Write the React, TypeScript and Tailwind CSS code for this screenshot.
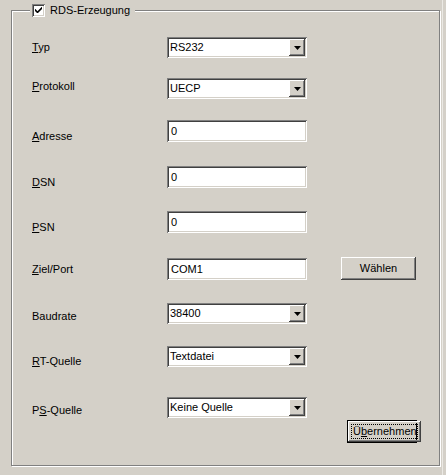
import React from "react";

const sunken =
  "shadow-[inset_1px_1px_0_#808080,inset_-1px_-1px_0_#ffffff,inset_2px_2px_0_#404040,inset_-2px_-2px_0_#d4d0c8]";
const raised =
  "shadow-[inset_-1px_-1px_0_#404040,inset_1px_1px_0_#ffffff,inset_-2px_-2px_0_#808080,inset_2px_2px_0_#d4d0c8]";

const Arrow = () => (
  <svg width="7" height="4" viewBox="0 0 7 4">
    <path d="M0 0H7L3.5 4Z" fill="black" />
  </svg>
);

const Combo = ({ value }: { value: string }) => (
  <div className={`flex h-[21px] w-[140px] bg-white p-[2px] ${sunken}`}>
    <div className="flex-1 pl-[1px] leading-[17px]">{value}</div>
    <div className={`flex h-[17px] w-[16px] items-center justify-center bg-[#d4d0c8] ${raised}`}>
      <Arrow />
    </div>
  </div>
);

const Edit = ({ value }: { value: string }) => (
  <div className={`h-[22px] w-[140px] bg-white pl-[4px] leading-[20px] pt-[1px] ${sunken}`}>{value}</div>
);

type Row = {
  pre: string;
  key_: string;
  post: string;
  h: string;
  lo: string;
  control: React.ReactNode;
  extra?: React.ReactNode;
};

const rows: Row[] = [
  { pre: "", key_: "T", post: "yp", h: "h-[41px]", lo: "pt-[4px]", control: <Combo value="RS232" /> },
  { pre: "", key_: "P", post: "rotokoll", h: "h-[42px]", lo: "pt-[2px]", control: <Combo value="UECP" /> },
  { pre: "", key_: "A", post: "dresse", h: "h-[46px]", lo: "pt-[10px]", control: <Edit value="0" /> },
  { pre: "", key_: "D", post: "SN", h: "h-[45px]", lo: "pt-[10px]", control: <Edit value="0" /> },
  { pre: "", key_: "P", post: "SN", h: "h-[47px]", lo: "pt-[10px]", control: <Edit value="0" /> },
  {
    pre: "",
    key_: "Z",
    post: "iel/Port",
    h: "h-[45px]",
    lo: "pt-[5px]",
    control: <Edit value="COM1" />,
    extra: (
      <div className={`ml-[34px] -mt-px flex h-[23px] w-[75px] items-center justify-center bg-[#d4d0c8] ${raised}`}>
        Wählen
      </div>
    ),
  },
  { pre: "Baudrate", key_: "", post: "", h: "h-[43px]", lo: "pt-[7px]", control: <Combo value="38400" /> },
  { pre: "", key_: "R", post: "T-Quelle", h: "h-[51px]", lo: "pt-[9px]", control: <Combo value="Textdatei" /> },
];

export default function App() {
  return (
    <div className="flex h-[475px] w-[446px] bg-[#d4d0c8] font-['Liberation_Sans',Arial,sans-serif] text-[11px] text-black">
      <div
        className={`relative ml-[11px] mt-[10px] h-[456px] w-[429px] border border-[#808080] pl-[20px] pt-[26px] shadow-[inset_1px_1px_0_#ffffff,1px_1px_0_#ffffff]`}
      >
        <div className="absolute left-[18px] top-[-7px] flex items-center bg-[#d4d0c8] pl-[2px] pr-[5px]">
          <div className={`flex h-[13px] w-[13px] items-center justify-center bg-white ${sunken}`}>
            <svg width="7" height="7" viewBox="0 0 7 7">
              <path d="M0 2V4L2 6H3L7 2V0H6.6L2.5 4.2L0.4 2Z" fill="black" />
            </svg>
          </div>
          <span className="ml-[5px] leading-[13px]">RDS-Erzeugung</span>
        </div>

        {rows.map((r, i) => (
          <div key={i} className={`flex ${r.h}`}>
            <div className={`w-[135px] leading-[13px] ${r.lo}`}>
              {r.pre}
              {r.key_ && <span className="underline">{r.key_}</span>}
              {r.post}
            </div>
            {r.control}
            {r.extra}
          </div>
        ))}

        <div className="flex">
          <div className="w-[135px] pt-[7px] leading-[13px]">
            P<span className="underline">S</span>-Quelle
          </div>
          <div className="flex flex-col">
            <Combo value="Keine Quelle" />
          </div>
        </div>
        <div className="ml-[315px] mt-[2px] flex h-[23px] w-[70px] border border-black bg-[#d4d0c8]">
          <div className={`flex flex-1 p-[3px] ${raised}`}>
            <div className="flex flex-1 items-center overflow-hidden whitespace-nowrap border border-dotted border-black pl-[1px]">
              Ü<span className="underline">b</span>ernehmen
            </div>
          </div>
        </div>
      </div>
      <div className="ml-[2px] h-full w-px bg-[#ebe9e4]" />
    </div>
  );
}
